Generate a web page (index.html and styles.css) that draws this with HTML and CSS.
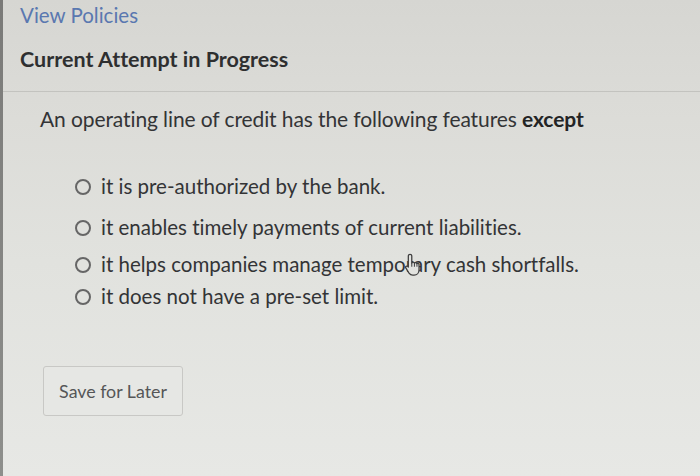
FILE: index.html
```html
<!DOCTYPE html>
<html>
<head>
<meta charset="utf-8">
<link rel="stylesheet" href="styles.css">
</head>
<body>
<div class="screen">
  <div class="edge"></div>
  <div class="content">
    <div class="policies">View Policies</div>
    <div class="attempt">Current Attempt in Progress</div>
    <div class="sep"></div>
    <div class="question">An operating line of credit has the following features <b>except</b></div>
    <ul class="options">
      <li class="opt opt1"><span class="radio"></span><span>it is pre-authorized by the bank.</span></li>
      <li class="opt opt2"><span class="radio"></span><span>it enables timely payments of current liabilities.</span></li>
      <li class="opt opt3"><span class="radio"></span><span class="hov">it helps companies manage tempo<span class="cur-wrap">ra<svg class="cursor" viewBox="0 0 16 20" width="19" height="23"><path d="M5 1.2c.9 0 1.5.6 1.5 1.5v6l.1-.1c.3-.8 1.9-.8 2.2.2.4-.7 1.8-.6 2.1.4.5-.5 1.9-.3 1.9.9v4.4c0 2.8-1.8 4.8-4.3 4.8H7.3c-1.4 0-2.4-.7-3.2-1.8L1.3 13c-.6-.9.4-2.1 1.5-1.4l.7.6V2.7c0-.9.6-1.5 1.5-1.5z" fill="#e2e3df" stroke="#3f3f3f" stroke-width="1.1" stroke-linejoin="round"/><path d="M6.5 8.6v3.4M8.8 8.8v3.2M11 9.1v2.9" stroke="#3f3f3f" stroke-width="0.9" fill="none"/></svg></span>ry cash shortfalls.</span></li>
      <li class="opt opt4"><span class="radio"></span><span>it does not have a pre-set limit.</span></li>
    </ul>
    <button class="save">Save for Later</button>
  </div>
</div>
</body>
</html>
```
FILE: styles.css
```css
html, body {
  margin: 0;
  padding: 0;
}
body {
  width: 700px;
  height: 476px;
  overflow: hidden;
  font-family: Lato, "Open Sans", sans-serif;
  font-variant-ligatures: none;
  background: #dcdcd8;
}
.screen {
  display: flex;
  width: 700px;
  height: 476px;
  background: linear-gradient(180deg, #d6d6d2 0%, #dcdcd8 25%, #e1e2de 55%, #e7e8e5 100%);
}
.edge {
  width: 3px;
  flex: none;
  background: linear-gradient(180deg, #7a7a78, #8e8f8c);
}
.content {
  flex: 1;
  display: flex;
  flex-direction: column;
}
.policies {
  margin: 3px 0 0 17px;
  font-size: 20.5px;
  line-height: 24px;
  color: #5a78b0;
}
.attempt {
  margin: 20px 0 0 17px;
  font-size: 21.5px;
  line-height: 24px;
  font-weight: 700;
  color: #2e2f30;
}
.sep {
  margin-top: 20px;
  height: 1px;
  background: #c3c3bf;
}
.question {
  margin: 14px 0 0 37px;
  font-size: 21px;
  line-height: 26px;
  color: #333436;
  letter-spacing: -0.1px;
}
.question b {
  font-weight: 700;
  color: #232425;
}
.options {
  list-style: none;
  margin: 42px 0 0 0;
  padding: 0 0 0 72px;
  display: flex;
  flex-direction: column;
}
.opt {
  display: flex;
  align-items: center;
  gap: 10px;
  font-size: 20.5px;
  line-height: 24px;
  color: #333436;
}
.opt2 { margin-top: 17px; }
.opt3 { margin-top: 13px; }
.opt4 { margin-top: 8px; }
.radio {
  width: 12px;
  height: 12px;
  border: 2px solid #666;
  border-radius: 50%;
  flex: none;
  margin-top: 1px;
}
.cur-wrap {
  position: relative;
}
.cursor {
  position: absolute;
  left: -2px;
  top: 1px;
}
.save {
  margin: 58px 0 0 40px;
  width: 140px;
  height: 50px;
  align-self: flex-start;
  border: 1px solid #c8c8c5;
  border-radius: 3px;
  background: #e6e7e4;
  font-family: Lato, "Open Sans", sans-serif;
  font-size: 17.8px;
  color: #555657;
  padding: 0;
}
```
